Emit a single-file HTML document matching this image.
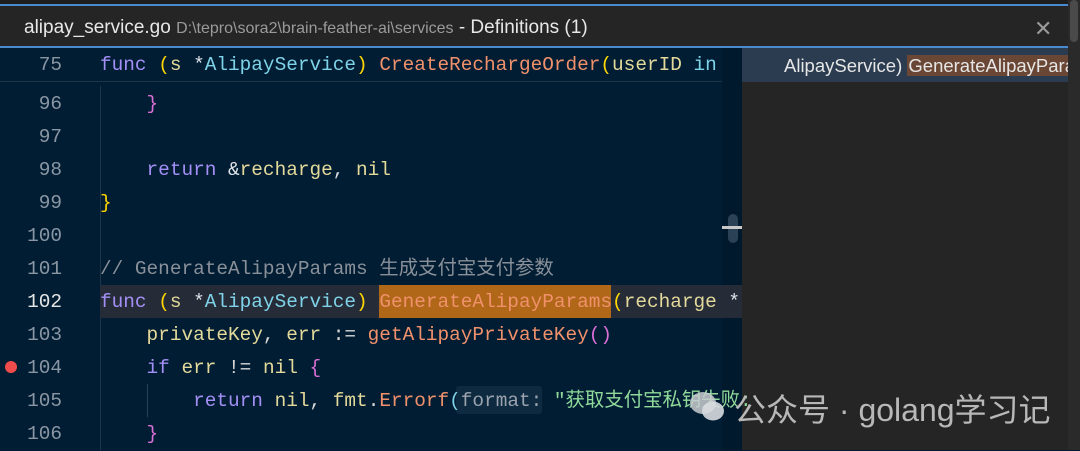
<!DOCTYPE html>
<html><head><meta charset="utf-8"><style>
*{margin:0;padding:0;box-sizing:border-box}
body{width:1080px;height:450px;overflow:hidden;background:#001d33;position:relative;font-family:"Liberation Sans",sans-serif}
.top{position:absolute;left:0;top:0;width:1080px;height:5px;background:#1e1e1e}
.bl{position:absolute;left:0;width:1068px;height:2px;background:#4a8bd0}
.hdr{position:absolute;left:0;top:6px;width:1068px;height:41px;background:#252526}
.hdr .t{position:absolute;left:24px;top:11px;font-size:19px;color:#e8e8e8;white-space:nowrap}
.hdr .t .p{font-size:16px;color:#9a9a9a}
.x{position:absolute;left:1034px;top:10px;color:#9a9a9a;font-size:22px}
.sb{position:absolute;left:1068px;top:0;width:12px;height:450px;background:#2a2a2a}
.sbt{position:absolute;left:1070px;top:0;width:8px;height:42px;background:#4a4a4a;border-radius:4px}
.right{position:absolute;left:742px;top:48px;width:326px;height:402px;background:#252526}
.rrow{position:absolute;left:742px;top:48px;width:326px;height:34px;background:#2b3c50;font-size:18.5px;color:#e6e6e6;white-space:nowrap;overflow:hidden;padding-left:42px;line-height:36px}
.rrow span{background:#6a4634;padding:0 1px}
.code{position:absolute;left:0;top:1px;font-family:"Liberation Mono","Noto Sans CJK SC",monospace;font-size:19.4px}
.ln{position:absolute;width:62px;text-align:right;color:#8a96a3;height:33px;line-height:33px}
.cl{position:absolute;left:100px;height:33px;line-height:33px;white-space:pre;color:#d9d9d9}
.k{color:#a38ff5}.y{color:#ffd700}.c{color:#7fd3e8}.f{color:#f0916c}.v{color:#e3d99a}.pk{color:#da6fd6}.g{color:#8a9099}.s{color:#8fd99a}.w{color:#e0e4ea}
</style></head><body>
<div class="top"></div>
<div class="bl" style="top:4px"></div>
<div class="hdr"><div class="t">alipay_service.go <span class="p">D:\tepro\sora2\brain-feather-ai\services</span> - Definitions (1)</div><div class="x">✕</div></div>
<div class="bl" style="top:46px"></div>
<div class="right"></div>
<div class="rrow">AlipayService) <span>GenerateAlipayParams</span></div>
<div class="sb"></div><div class="sbt"></div>
<div style="position:absolute;left:0;top:81px;width:722px;height:1px;background:#1e3548"></div>
<div style="position:absolute;left:100px;top:86px;width:1px;height:364px;background:#1e3548"></div>
<div style="position:absolute;left:722px;top:48px;width:20px;height:402px;background:#00192c"></div>
<div style="position:absolute;left:728px;top:214px;width:10px;height:29px;background:#2a4156;border-radius:5px"></div>
<div style="position:absolute;left:722px;top:226px;width:20px;height:3px;background:#c8c8c8"></div>
<div style="position:absolute;left:100px;top:285px;width:642px;height:33px;background:#262b38"></div>
<div style="position:absolute;left:379px;top:285px;width:232px;height:33px;background:#b06718"></div>
<div style="position:absolute;left:147px;top:384px;width:1px;height:33px;background:#2a4156"></div>
<div style="position:absolute;left:456px;top:386px;width:86px;height:28px;background:#0d2a40;border-radius:3px"></div>
<div style="position:absolute;left:5px;top:361px;width:12px;height:12px;background:#f14c4c;border-radius:50%"></div>
<div class="code">
<div class="ln" style="top:48px">75</div><div class="cl" style="top:48px"><span class="k">func</span> <span class="y">(</span><span class="v">s</span> <span class="w">*</span><span class="c">AlipayService</span><span class="y">)</span> <span class="f">CreateRechargeOrder</span><span class="y">(</span><span class="v">userID</span> <span class="c">in</span></div>
<div class="ln" style="top:87px">96</div><div class="cl" style="top:87px">    <span class="pk">}</span></div>
<div class="ln" style="top:120px">97</div>
<div class="ln" style="top:153px">98</div><div class="cl" style="top:153px">    <span class="k">return</span> <span class="w">&amp;</span><span class="v">recharge</span>, <span class="v">nil</span></div>
<div class="ln" style="top:186px">99</div><div class="cl" style="top:186px"><span class="y">}</span></div>
<div class="ln" style="top:219px">100</div>
<div class="ln" style="top:252px">101</div><div class="cl g" style="top:252px">// GenerateAlipayParams 生成支付宝支付参数</div>
<div class="ln" style="top:285px;color:#e6e6e6">102</div><div class="cl" style="top:285px"><span class="k">func</span> <span class="y">(</span><span class="v">s</span> <span class="w">*</span><span class="c">AlipayService</span><span class="y">)</span> <span class="f">GenerateAlipayParams</span><span class="y">(</span><span class="v">recharge</span> <span class="w">*</span></div>
<div class="ln" style="top:318px">103</div><div class="cl" style="top:318px">    <span class="v">privateKey</span>, <span class="v">err</span> := <span class="f">getAlipayPrivateKey</span><span class="pk">()</span></div>
<div class="ln" style="top:351px">104</div><div class="cl" style="top:351px">    <span class="k">if</span> <span class="v">err</span> != <span class="v">nil</span> <span class="pk">{</span></div>
<div class="ln" style="top:384px">105</div><div class="cl" style="top:384px">        <span class="k">return</span> <span class="v">nil</span>, <span class="v">fmt</span>.<span class="f">Errorf</span><span class="c">(</span><span style="color:#9aa3ad">format:</span> <span class="s">"获取支付宝私钥失败:</span></div>
<div class="ln" style="top:417px">106</div><div class="cl" style="top:417px">    <span class="pk">}</span></div>
</div>
<svg style="position:absolute;left:688px;top:390px" width="40" height="34" viewBox="0 0 40 34"><ellipse cx="15" cy="13" rx="13" ry="11" fill="#c8ccd0" opacity=".85"/><ellipse cx="25" cy="21" rx="11" ry="9.5" fill="#d8dcdf" opacity=".9"/></svg>
<div style="position:absolute;left:734px;top:385px;font-family:'Liberation Sans','Noto Sans CJK SC',sans-serif;font-size:32px;color:#b8b8b8;white-space:nowrap">公众号 · golang学习记</div>
</body></html>
